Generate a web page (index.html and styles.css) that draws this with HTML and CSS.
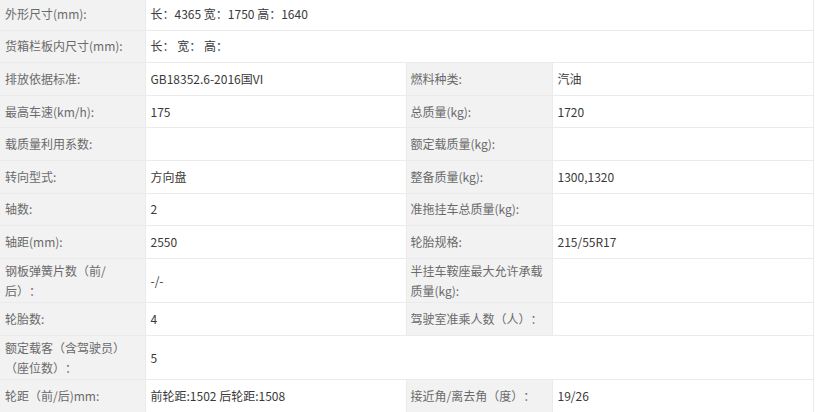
FILE: index.html
```html
<!DOCTYPE html>
<html lang="zh-CN">
<head>
<meta charset="utf-8">
<link rel="stylesheet" href="styles.css">
</head>
<body>
<table class="spec">
  <colgroup>
    <col class="c-l1"><col class="c-v1"><col class="c-l2"><col class="c-v2">
  </colgroup>
  <tr><td class="lab">外形尺寸(mm):</td><td class="val" colspan="3">长：4365 宽：1750 高：1640</td></tr>
  <tr><td class="lab">货箱栏板内尺寸(mm):</td><td class="val" colspan="3">长：&nbsp;宽：&nbsp;高：</td></tr>
  <tr><td class="lab">排放依据标准:</td><td class="val">GB18352.6-2016国VI</td><td class="lab lab2">燃料种类:</td><td class="val">汽油</td></tr>
  <tr><td class="lab">最高车速(km/h):</td><td class="val">175</td><td class="lab lab2">总质量(kg):</td><td class="val">1720</td></tr>
  <tr><td class="lab">载质量利用系数:</td><td class="val"></td><td class="lab lab2">额定载质量(kg):</td><td class="val"></td></tr>
  <tr><td class="lab">转向型式:</td><td class="val">方向盘</td><td class="lab lab2">整备质量(kg):</td><td class="val">1300,1320</td></tr>
  <tr><td class="lab">轴数:</td><td class="val">2</td><td class="lab lab2">准拖挂车总质量(kg):</td><td class="val"></td></tr>
  <tr><td class="lab">轴距(mm):</td><td class="val">2550</td><td class="lab lab2">轮胎规格:</td><td class="val">215/55R17</td></tr>
  <tr class="tall"><td class="lab">钢板弹簧片数（前/后）：</td><td class="val">-/-</td><td class="lab lab2">半挂车鞍座最大允许承载质量(kg):</td><td class="val"></td></tr>
  <tr><td class="lab">轮胎数:</td><td class="val">4</td><td class="lab lab2">驾驶室准乘人数（人）：</td><td class="val"></td></tr>
  <tr class="tall"><td class="lab">额定载客（含驾驶员）（座位数）：</td><td class="val" colspan="3">5</td></tr>
  <tr><td class="lab">轮距（前/后)mm:</td><td class="val">前轮距:1502 后轮距:1508</td><td class="lab lab2">接近角/离去角（度）：</td><td class="val">19/26</td></tr>
</table>
</body>
</html>
```

FILE: styles.css
```css
html, body {
  margin: 0;
  padding: 0;
  background: #ffffff;
}
body {
  font-family: "Noto Sans CJK SC", "Noto Sans", sans-serif;
  font-size: 12px;
  overflow: hidden;
  text-spacing-trim: space-all;
}
.spec {
  border-collapse: collapse;
  table-layout: fixed;
  width: 813px;
  margin-top: -3px;
}
.c-l1 { width: 145px; }
.c-v1 { width: 261px; }
.c-l2 { width: 146px; }
.c-v2 { width: 261px; }
.spec tr { height: 32.6px; }
.spec tr.tall { height: 44.5px; }
.spec td {
  border: 1px solid #ebebeb;
  padding: 0 5px;
  line-height: 20px;
  vertical-align: middle;
}
.spec td.lab {
  background: #f2f2f2;
  color: #6a6a6a;
  border-left: none;
}
.spec td.lab2 { padding-left: 4px; }
.spec td.val {
  color: #3a3a3a;
  background: #ffffff;
}
```
